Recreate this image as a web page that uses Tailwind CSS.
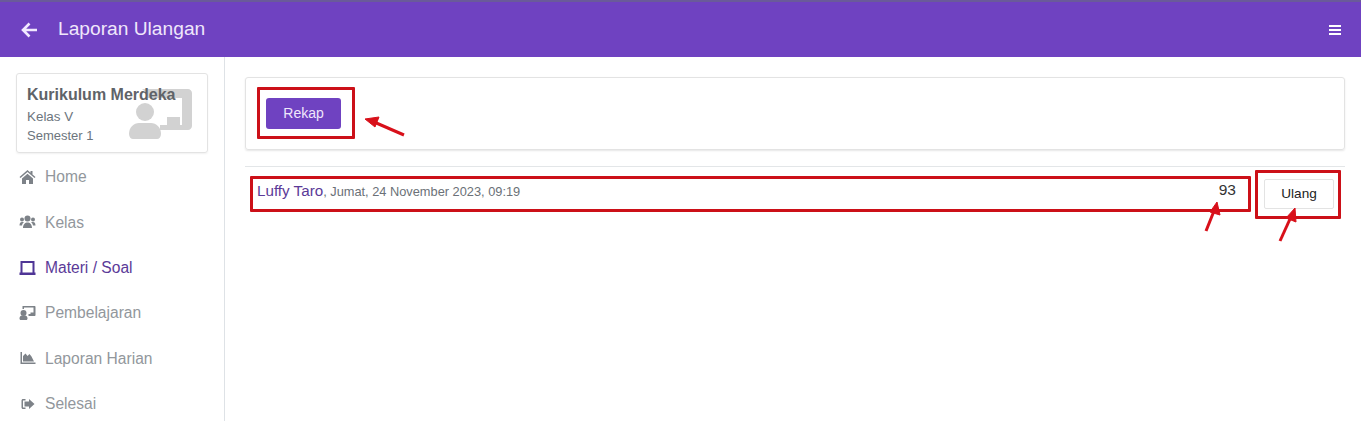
<!DOCTYPE html>
<html lang="en">

<head>
    <meta charset="UTF-8">
    <meta name="viewport" content="width=device-width, initial-scale=1.0">
    <title>Laporan Ulangan</title>
    <script src="https://cdn.jsdelivr.net/npm/@tailwindcss/browser@4"></script>
</head>

<body class="bg-white font-['Liberation_Sans',Arial,sans-serif] overflow-hidden">
    <div class="relative h-[421px] w-[1361px] overflow-hidden">
        <!-- header -->
        <header class="h-[57px] bg-[#6f42c1] border-t-[2px] border-[#6a5a9a] flex items-center text-white">
            <svg class="ml-[20px] w-[18px] h-[18px]" viewBox="0 0 18 18" fill="none" stroke="#f1e9ff" stroke-width="2.6"><path d="M17 9H3M9.500 2.500 3 9l6.500 6.500"/></svg>
            <div class="ml-[20px] text-[19.200px] text-[#efe7fb]">Laporan Ulangan</div>
            <div class="ml-auto mr-[20px] w-[12px] flex flex-col gap-[2px]">
                <div class="h-[2px] bg-white"></div>
                <div class="h-[2px] bg-white"></div>
                <div class="h-[2px] bg-white"></div>
            </div>
        </header>

        <div class="flex h-[364px]">
            <!-- sidebar -->
            <aside class="w-[225px] shrink-0 border-r border-[#dee2e6] px-[16px] pt-[16px]">
                <div class="relative h-[80px] border border-[#e3e3e3] rounded-[3px] shadow-[0_1px_2px_rgba(0,0,0,0.06)] pl-[10px] pt-[11px]">
                    <svg class="absolute left-[112px] top-[15px] w-[64px] h-[50px]" viewBox="0 0 64 50" fill="#d2d2d2">
                        <circle cx="16" cy="23" r="9"/>
                        <path d="M0 45c0-7 5-11 10-11h12c5 0 10 4 10 11 0 3-2 5-4 5H4c-2 0-4-2-4-5z"/>
                        <path d="M13 0h46c2 0 4 2 4 4v33c0 2-2 4-4 4H31v-5h7v-8h13v8h2V9H19c-1-4-3-7-6-9z"/>
                    </svg>
                    <div class="relative text-[16px] leading-[20px] font-bold text-[#5f6368]">Kurikulum Merdeka</div>
                    <div class="relative text-[13.400px] leading-[19px] mt-[2px] text-[#6c757d]">Kelas V</div>
                    <div class="relative text-[13px] leading-[19px] text-[#6c757d]">Semester 1</div>
                </div>
                <nav class="mt-[1.500px] pl-[3px] text-[15.600px] text-[#92979c]">
                    <div class="flex items-center h-[45.300px] gap-[9px]">
                        <svg class="w-[17px] h-[14px]" viewBox="0 0 16 14" fill="#7d8288"><path d="M8 0 0 7l1 1 7-6 7 6 1-1-3-2.600V1h-2v1.700zM2.500 8.500 8 3.700l5.500 4.800V14H9.500V10h-3v4h-4z"/></svg>
                        <span>Home</span>
                    </div>
                    <div class="flex items-center h-[45.300px] gap-[9px]">
                        <svg class="w-[17px] h-[14px]" viewBox="0 0 16 14" fill="#7d8288"><circle cx="8" cy="3.500" r="3"/><circle cx="2.500" cy="4.500" r="2"/><circle cx="13.500" cy="4.500" r="2"/><path d="M3.500 13c0-3.500 2-5.500 4.500-5.500s4.500 2 4.500 5.500zM0 10.500C0 8 1 7 2.500 7h2c-1 1-1.800 2-2 3.500zM16 10.500C16 8 15 7 13.500 7h-2c1 1 1.800 2 2 3.500z"/></svg>
                        <span>Kelas</span>
                    </div>
                    <div class="flex items-center h-[45.300px] gap-[9px] text-[#5b3a98]">
                        <svg class="w-[17px] h-[14px]" viewBox="0 0 16 14" fill="#4f3596"><path d="M1 0h14v12H13V2H3v10H1zM0 11.500h16V14H0z"/></svg>
                        <span>Materi / Soal</span>
                    </div>
                    <div class="flex items-center h-[45.300px] gap-[9px]">
                        <svg class="w-[17px] h-[14px]" viewBox="0 0 16 14" fill="#7d8288"><circle cx="4" cy="7" r="3"/><path d="M0 12.500C0 10.500 1.200 9.500 2.500 9.500h3C6.800 9.500 8 10.500 8 12.500c0 .800-.500 1.500-1.300 1.500H1.300C.500 14 0 13.300 0 12.500z"/><path d="M3 0h12c.600 0 1 .400 1 1v8c0 .600-.400 1-1 1H9V8h2V6.500h3v-5H4.500V3H3z"/></svg>
                        <span>Pembelajaran</span>
                    </div>
                    <div class="flex items-center h-[45.300px] gap-[9px]">
                        <svg class="w-[17px] h-[14px]" viewBox="0 0 16 14" fill="#7d8288"><path d="M1 1h1.500v10.500H16V13H1z"/><path d="M3.500 10.500V5l2.500-2.500L8 5l2-2 2 2.500 2.500 5z"/></svg>
                        <span>Laporan Harian</span>
                    </div>
                    <div class="flex items-center h-[45.300px] gap-[9px]">
                        <svg class="w-[17px] h-[14px]" viewBox="0 0 16 14" fill="#7d8288"><path d="M6 2H3.500C2.700 2 2 2.700 2 3.500v7c0 .800.700 1.500 1.500 1.500H6v-1.500H3.500v-7H6z"/><path d="M9.500 2 15 7l-5.500 5V9.500H5v-5h4.500z"/></svg>
                        <span>Selesai</span>
                    </div>
                </nav>
            </aside>

            <!-- content -->
            <main class="flex-1 pl-[20px] pr-[16px] pt-[20px]">
                <div class="h-[73px] border border-[#e3e3e3] rounded-[3px] shadow-[0_1px_2px_rgba(0,0,0,0.1)] pl-[20px] pt-[20px]">
                    <button class="w-[75px] h-[31px] rounded-[3px] bg-[#6f42c1] text-[#efe7fb] text-[14px]">Rekap</button>
                </div>
                <div class="mt-[16px] border-t border-[#e3e6e8] h-[60px] flex pt-[12px]">
                    <div class="flex-1 flex items-start pl-[12px] pr-[109px]">
                        <div class="text-[#6b7177] text-[12.800px] leading-[24px]"><span class="text-[15.200px] text-[#5b3a98]">Luffy Taro</span>, Jumat, 24 November 2023, 09:19</div>
                        <div class="ml-auto text-[15.500px] leading-[22px] text-[#333]">93</div>
                    </div>
                    <button class="absolute left-[1264px] top-[179px] w-[70px] h-[30px] border border-[#e3e3e3] rounded-[2px] text-[13.600px] text-[#222]">Ulang</button>
                </div>
            </main>
        </div>

        <!-- red annotations over the screenshot -->
        <div class="absolute left-[257px] top-[87px] w-[98px] h-[52px] border-[3px] border-[#cc1018] rounded-[1px]"></div>
        <div class="absolute left-[250px] top-[176px] w-[1001px] h-[36px] border-[3px] border-[#cc1018] rounded-[1px]"></div>
        <div class="absolute left-[1255px] top-[170px] w-[86px] h-[49px] border-[3px] border-[#cc1018] rounded-[1px]"></div>
        <svg class="absolute left-0 top-0" width="1361" height="421" fill="#d8101a" stroke="#d8101a">
            <path d="M404 135 374 122" stroke-width="3" fill="none"/>
            <path d="M365 119 379 117 375 127z" stroke-width="1"/>
            <path d="M1206 231 1214 211" stroke-width="3" fill="none"/>
            <path d="M1217 202 1220 215 1210 212z" stroke-width="1"/>
            <path d="M1280 241 1290 219" stroke-width="3" fill="none"/>
            <path d="M1295 208 1296 222 1286 218z" stroke-width="1"/>
        </svg>
    </div>
</body>
</html>
